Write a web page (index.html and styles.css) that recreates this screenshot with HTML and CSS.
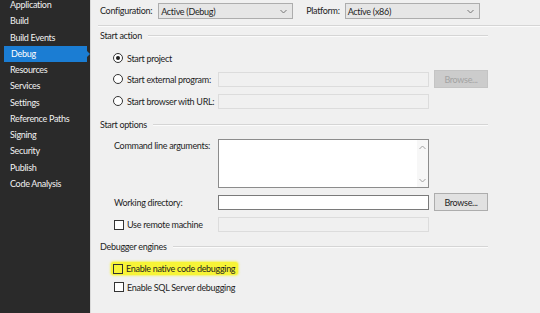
FILE: index.html
```html
<!DOCTYPE html>
<html>
<head>
<meta charset="utf-8">
<link rel="stylesheet" href="styles.css">
</head>
<body>
<div class="app">
  <nav class="sidebar">
    <ul class="nav">
      <li>Application</li>
      <li>Build</li>
      <li>Build Events</li>
      <li class="active">Debug</li>
      <li>Resources</li>
      <li>Services</li>
      <li>Settings</li>
      <li>Reference Paths</li>
      <li>Signing</li>
      <li>Security</li>
      <li>Publish</li>
      <li>Code Analysis</li>
    </ul>
  </nav>
  <main class="main">
    <div class="topbar">
      <span class="toplabel">Configuration:</span>
      <div class="select sel-config"><span>Active (Debug)</span><svg class="chev" width="7" height="5" viewBox="0 0 7 5"><path d="M0.5 1 L3.5 4 L6.5 1" fill="none" stroke="#777" stroke-width="1"/></svg></div>
      <span class="toplabel platform">Platform:</span>
      <div class="select sel-platform"><span>Active (x86)</span><svg class="chev" width="7" height="5" viewBox="0 0 7 5"><path d="M0.5 1 L3.5 4 L6.5 1" fill="none" stroke="#777" stroke-width="1"/></svg></div>
    </div>
    <div class="rule"></div>

    <section class="group">
      <div class="group-head h1"><span>Start action</span><i class="gline"></i></div>
      <div class="row r-project"><span class="radio checked"></span><span>Start project</span></div>
      <div class="row form r-ext">
        <div class="lab"><span class="radio"></span><span>Start external program:</span></div>
        <div class="field disabled"></div>
        <div class="btn disabled">Browse...</div>
      </div>
      <div class="row form r-url">
        <div class="lab"><span class="radio"></span><span>Start browser with URL:</span></div>
        <div class="field disabled"></div>
      </div>

      <div class="group-head h2"><span>Start options</span><i class="gline"></i></div>
      <div class="row form r-cmd">
        <div class="lab top">Command line arguments:</div>
        <div class="textarea">
          <div class="scroll">
            <svg width="7" height="5" viewBox="0 0 7 5"><path d="M0.5 4 L3.5 1 L6.5 4" fill="none" stroke="#a0a0a0" stroke-width="1"/></svg>
            <svg width="7" height="5" viewBox="0 0 7 5"><path d="M0.5 1 L3.5 4 L6.5 1" fill="none" stroke="#a0a0a0" stroke-width="1"/></svg>
          </div>
        </div>
      </div>
      <div class="row form r-wd">
        <div class="lab">Working directory:</div>
        <div class="field active"></div>
        <div class="btn">Browse...</div>
      </div>
      <div class="row form r-remote">
        <div class="lab"><span class="check"></span><span>Use remote machine</span></div>
        <div class="field disabled"></div>
      </div>

      <div class="group-head h3"><span>Debugger engines</span><i class="gline"></i></div>
      <div class="row r-native"><span class="hl"><span class="check clear"></span><span>Enable native code debugging</span></span></div>
      <div class="row r-sql"><span class="check"></span><span>Enable SQL Server debugging</span></div>
    </section>
  </main>
</div>
</body>
</html>
```
FILE: styles.css
```css
* { box-sizing: border-box; }
html, body { margin: 0; padding: 0; }
body {
  width: 540px;
  height: 313px;
  overflow: hidden;
  font-family: Lato, "Liberation Sans", sans-serif;
  font-size: 9px;
  letter-spacing: -0.3px;
  color: #1e1e1e;
  background: #f0f0f0;
}
.app { display: flex; height: 313px; }

.sidebar {
  width: 90px;
  flex: none;
  background: #2a2a2a;
  color: #f1f1f1;
  overflow: hidden;
}
.nav { list-style: none; margin: -3px 0 0 0; padding: 0; }
.nav li {
  height: 16.27px;
  line-height: 16.27px;
  padding-left: 10px;
  white-space: nowrap;
}
.nav li.active {
  position: relative;
  margin-left: 4px;
  width: 83px;
  padding-left: 7px;
  background: #1b7dd3;
  color: #fff;
}
.nav li.active::after {
  content: "";
  position: absolute;
  right: -3px;
  top: 50%;
  margin-top: -3px;
  border-left: 3px solid #1b7dd3;
  border-top: 3px solid transparent;
  border-bottom: 3px solid transparent;
}

.main {
  flex: 1;
  background: #f0f0f0;
  border-left: 1px solid #d9d9d9;
  padding-left: 7px;
  display: flex;
  flex-direction: column;
}

.topbar {
  display: flex;
  align-items: center;
  padding-top: 3px;
  height: 19px;
  padding-left: 2px;
}
.toplabel { line-height: 16px; white-space: nowrap; }
.select {
  height: 16px;
  background: #e6e6e6;
  border: 1px solid #adadad;
  display: flex;
  align-items: center;
  justify-content: space-between;
  padding: 0 5px 0 2px;
  flex: none;
}
.sel-config { width: 135px; margin-left: 6px; }
.sel-platform { width: 135px; margin-left: 5px; }
.platform { margin-left: 13px; }
.chev { display: block; }

.rule {
  margin-top: 6px;
  height: 2px;
  border-top: 1px solid #d5d5d5;
  border-bottom: 1px solid #fbfbfb;
}

.group {
  width: 390px;
  display: flex;
  flex-direction: column;
}
.group-head {
  height: 14px;
  display: flex;
  align-items: center;
  padding-left: 2px;
}
.group-head span { margin-right: 6px; line-height: 14px; white-space: nowrap; }
.gline {
  flex: 1;
  height: 2px;
  border-top: 1px solid #d5d5d5;
  border-bottom: 1px solid #fbfbfb;
  margin-top: -1px;
}
.h1 { margin-top: 2px; }
.h2 { margin-top: 9px; }
.h3 { margin-top: 8px; }

.row {
  display: flex;
  align-items: center;
  padding-left: 16px;
}
.form {
  display: grid;
  grid-template-columns: 99px 211px 54px;
  column-gap: 5px;
  align-items: center;
}
.lab { display: flex; align-items: center; white-space: nowrap; }
.lab.top { align-self: start; line-height: 14px; }

.r-project { margin-top: 8px; height: 14px; }
.r-ext { margin-top: 5px; height: 18px; }
.r-url { margin-top: 5px; height: 16px; }
.r-cmd { margin-top: 7px; height: 49px; }
.r-wd { margin-top: 5px; height: 18px; }
.r-remote { margin-top: 6px; height: 15px; }
.r-native { margin-top: 8px; height: 13px; padding-left: 13px; }
.r-sql { margin-top: 5px; height: 14px; }

.radio {
  width: 10px;
  height: 10px;
  border-radius: 50%;
  border: 1px solid #333;
  background: #fff;
  margin: 0 4px 0 -1px;
  flex: none;
  display: flex;
  align-items: center;
  justify-content: center;
}
.radio.checked::after {
  content: "";
  width: 4px;
  height: 4px;
  border-radius: 50%;
  background: #1e1e1e;
}
.check {
  width: 10px;
  height: 10px;
  border: 1px solid #333;
  background: #fff;
  margin-right: 3px;
  flex: none;
}
.check.clear { background: transparent; }

.field {
  height: 15px;
  border: 1px solid #c9c9c9;
}
.field.disabled { background: #f0f0f0; border-color: #dcdcdc; }
.field.active { background: #fff; border-color: #7a7a7a; }

.textarea {
  height: 49px;
  background: #fff;
  border: 1px solid #8c8c8c;
  display: flex;
  justify-content: flex-end;
}
.scroll {
  width: 11px;
  display: flex;
  flex-direction: column;
  justify-content: space-between;
  align-items: center;
  padding: 5px 0 4px;
  background: #f7f7f7;
}
.scroll svg { display: block; }

.btn {
  height: 18px;
  background: #e1e1e1;
  border: 1px solid #adadad;
  display: flex;
  align-items: center;
  justify-content: center;
  color: #1e1e1e;
}
.btn.disabled {
  background: #cccccc;
  border-color: #c4c4c4;
  color: #a3a3a3;
}

.hl {
  display: flex;
  align-items: center;
  height: 13px;
  padding: 0 3px 0 2px;
  background: #f7f437;
  border-radius: 3px;
  box-shadow: 0 0 2px 1px rgba(247, 244, 55, 0.7);
}
```
